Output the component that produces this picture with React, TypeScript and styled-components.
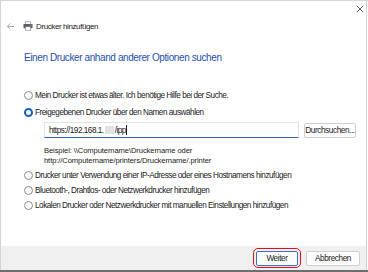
import styled, { createGlobalStyle } from 'styled-components';

const GlobalStyle = createGlobalStyle`
  html, body {
    margin: 0;
    padding: 0;
    background: #ffffff;
  }
  body {
    font-family: 'Segoe UI', 'Liberation Sans', Arial, sans-serif;
    color: #1a1a1a;
  }
`;

const Screen = styled.div`
  width: 368px;
  height: 272px;
  overflow: hidden;
  display: flex;
  flex-direction: column;
  background: #ffffff;
  border-top: 1px solid #d6d6d6;
  box-sizing: border-box;
  position: relative;
`;

const BehindStrip = styled.div`
  position: absolute;
  top: -1px;
  right: 0;
  width: 58px;
  height: 1px;
  background: #9dbbd8;
`;

const Window = styled.div`
  flex: 1;
  display: flex;
  flex-direction: column;
  border-left: 1px solid #d4d4d4;
  border-right: 1px solid #cfcfcf;
  margin-right: 1px;
  min-height: 0;
`;

const TitleBar = styled.div`
  height: 16px;
  display: flex;
  justify-content: flex-end;
  align-items: flex-start;
  padding: 4px 2px 0 0;
  box-sizing: border-box;
`;

const CloseIcon = styled.svg`
  width: 8px;
  height: 8px;
`;

const Header = styled.div`
  display: flex;
  align-items: center;
  height: 14px;
  padding-left: 5px;
  margin-top: 2px;
  font-size: 8px;
  letter-spacing: -0.4px;
  color: #1a1a1a;
`;

const BackArrow = styled.svg`
  width: 9px;
  height: 9px;
  margin-right: 8px;
`;

const PrinterIcon = styled.svg`
  width: 10px;
  height: 10px;
  margin-right: 3px;
`;

const Content = styled.div`
  flex: 1;
  padding-left: 23px;
  display: flex;
  flex-direction: column;
`;

const Heading = styled.div`
  margin-top: 17px;
  font-size: 10px;
  letter-spacing: -0.4px;
  color: #1e4fb0;
  line-height: 16px;
`;

const Options = styled.div`
  margin-top: 23px;
  display: flex;
  flex-direction: column;
  font-size: 8.2px;
  letter-spacing: -0.48px;
`;

const OptionRow = styled.label<{ $gap?: number }>`
  display: flex;
  align-items: center;
  height: 12px;
  margin-bottom: ${p => p.$gap ?? 5}px;
  white-space: nowrap;
`;

const Radio = styled.span<{ $checked?: boolean }>`
  width: 9px;
  height: 9px;
  border-radius: 50%;
  box-sizing: border-box;
  border: ${p => (p.$checked ? '2.5px solid #1060c8' : '1px solid #8a8a8a')};
  background: #ffffff;
  margin-right: 2px;
  flex-shrink: 0;
`;

const ShareBlock = styled.div`
  padding-left: 20px;
  display: flex;
  flex-direction: column;
  margin-bottom: 3px;
`;

const InputRow = styled.div`
  display: flex;
  align-items: center;
  gap: 5px;
`;

const TextInput = styled.div`
  width: 255px;
  height: 16px;
  box-sizing: border-box;
  border: 1px solid #e2e2e2;
  border-bottom: 1.5px solid #2a63c4;
  display: flex;
  align-items: center;
  padding-left: 4px;
`;

const Masked = styled.span`
  display: inline-block;
  width: 9px;
  height: 8px;
  background: #e2e2e2;
  margin: 0 1px;
`;

const Caret = styled.span`
  display: inline-block;
  width: 1px;
  height: 10px;
  background: #1a1a1a;
  margin-left: 0.5px;
`;

const Button = styled.button<{ $width: number }>`
  width: ${p => p.$width}px;
  height: 15px;
  padding: 0;
  box-sizing: border-box;
  background: #fdfdfd;
  border: 1px solid #cfcfcf;
  border-radius: 2px;
  font-family: inherit;
  font-size: 8.2px;
  letter-spacing: -0.4px;
  color: #1a1a1a;
  display: flex;
  align-items: center;
  justify-content: center;
`;

const Example = styled.div`
  margin-top: 8px;
  font-size: 7.6px;
  letter-spacing: -0.1px;
  line-height: 10px;
  color: #1a1a1a;
`;

const Footer = styled.div`
  height: 24px;
  background: #f0f0f0;
  display: flex;
  justify-content: flex-end;
  align-items: center;
  gap: 5px;
  padding-right: 6px;
  box-sizing: border-box;
`;

const Highlight = styled.div`
  border: 1.5px solid #e0101a;
  border-radius: 5px;
  padding: 1.5px 2px;
  display: flex;
`;

const PrimaryButton = styled(Button)`
  border: 1px solid #3a6ed0;
`;

const Taskbar = styled.div`
  height: 2px;
  background: #6e6e6e;
`;

export default function App() {
  return (
    <>
      <GlobalStyle />
      <Screen>
        <BehindStrip />
        <Window>
          <TitleBar>
            <CloseIcon viewBox="0 0 10 10">
              <path d="M1 1L9 9M9 1L1 9" stroke="#333" strokeWidth="1" />
            </CloseIcon>
          </TitleBar>
          <Header>
            <BackArrow viewBox="0 0 10 10">
              <path d="M9 5H1.5M5 1.5L1.5 5L5 8.5" stroke="#9a9a9a" strokeWidth="0.9" fill="none" />
            </BackArrow>
            <PrinterIcon viewBox="0 0 10 10">
              <rect x="2.5" y="0.8" width="5" height="2.5" fill="#ffffff" stroke="#7a7a7a" strokeWidth="0.6" />
              <rect x="0.5" y="3" width="9" height="4.2" rx="0.6" fill="#5a5f66" />
              <rect x="2.3" y="5.8" width="5.4" height="3.4" fill="#ffffff" stroke="#7a7a7a" strokeWidth="0.6" />
              <rect x="7.4" y="3.8" width="1" height="0.8" fill="#8fd0ff" />
            </PrinterIcon>
            Drucker hinzufügen
          </Header>
          <Content>
            <Heading>Einen Drucker anhand anderer Optionen suchen</Heading>
            <Options>
              <OptionRow>
                <Radio />
                Mein Drucker ist etwas älter. Ich benötige Hilfe bei der Suche.
              </OptionRow>
              <OptionRow $gap={4}>
                <Radio $checked />
                Freigegebenen Drucker über den Namen auswählen
              </OptionRow>
              <ShareBlock>
                <InputRow>
                  <TextInput>
                    https://192.168.1.<Masked />/ipp<Caret />
                  </TextInput>
                  <Button $width={52}>Durchsuchen...</Button>
                </InputRow>
                <Example>
                  Beispiel: \\Computername\Druckername oder
                  <br />
                  http://Computername/printers/Druckername/.printer
                </Example>
              </ShareBlock>
              <OptionRow $gap={3}>
                <Radio />
                Drucker unter Verwendung einer IP-Adresse oder eines Hostnamens hinzufügen
              </OptionRow>
              <OptionRow $gap={3}>
                <Radio />
                Bluetooth-, Drahtlos- oder Netzwerkdrucker hinzufügen
              </OptionRow>
              <OptionRow $gap={0}>
                <Radio />
                Lokalen Drucker oder Netzwerkdrucker mit manuellen Einstellungen hinzufügen
              </OptionRow>
            </Options>
          </Content>
          <Footer>
            <Highlight>
              <PrimaryButton $width={42}>Weiter</PrimaryButton>
            </Highlight>
            <Button $width={54}>Abbrechen</Button>
          </Footer>
        </Window>
        <Taskbar />
      </Screen>
    </>
  );
}
